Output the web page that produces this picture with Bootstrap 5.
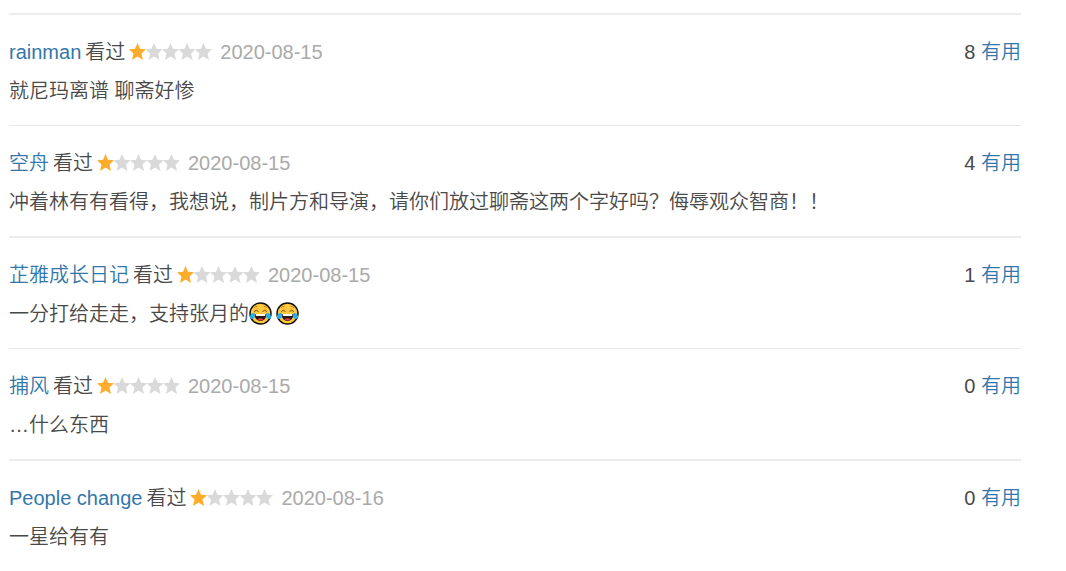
<!DOCTYPE html>
<html lang="zh-CN">
<head>
<meta charset="utf-8">
<meta name="viewport" content="width=device-width, initial-scale=1">
<title>短评</title>
<link href="https://cdn.jsdelivr.net/npm/bootstrap@5.3.0/dist/css/bootstrap.min.css" rel="stylesheet">
<style>
body { font-family: "Liberation Sans", "Noto Sans CJK SC", sans-serif; font-size: 20px; line-height: 30px; font-weight: 350; color: #494949; background: #fff; }
.reviews { padding: 13px 45px 0 9px; }
.review { border-top: 1px solid #e8e8e8; padding: 22px 0 19px; }
.review:nth-child(odd) { border-top: 2px solid #ececec; }
.review a { color: #3377aa; text-decoration: none; }
.review a:hover { text-decoration: underline; }
.review-head { gap: 4px; }
.review time { color: #aaa; margin-left: 4px; }
.review-text { margin: 9px 0 0; }
.rating { width: 83px; height: 18px; flex: none; }
.emoji { width: 23px; height: 23px; margin-right: 4px; vertical-align: -4px; }
</style>
</head>
<body>
<svg class="d-none" aria-hidden="true">
  <defs>
    <path id="star" d="M8.5 0 11 5.8 17 6.3 12.5 10.4 14 17 8.5 13.6 3 17 4.5 10.4 0 6.3 6 5.8Z"/>
    <symbol id="rate1" viewBox="0 0 83 18">
      <use href="#star" fill="#ffac2d"/>
      <g fill="#d9d9d9"><use href="#star" x="16.5"/><use href="#star" x="33"/><use href="#star" x="49.5"/><use href="#star" x="66"/></g>
    </symbol>
    <symbol id="joy" viewBox="0 0 23 23">
      <circle cx="11.5" cy="11.5" r="10.5" fill="#ffc83d" stroke="#111" stroke-width="1.5"/>
      <path d="M5 5.8Q6.5 4.2 8.3 4.4M14.7 4.4Q16.5 4.2 18 5.8" fill="none" stroke="#c78319"/>
      <path d="M5.2 9.7Q7.2 6.800 9.5 9.5M13.5 9.5Q15.8 6.800 17.8 9.7" fill="none" stroke="#6b4420"/>
      <path d="M5.5 12H17.5Q17 19 11.5 19T5.5 12Z" fill="#2a1718"/>
      <path d="M6.5 12H16.5L16 14H7Z" fill="#fff"/>
      <path d="M8.5 17.5Q11.5 15 14.5 17.5 11.5 19.6 8.5 17.5Z" fill="#f03a35"/>
      <path d="M5.500 10.800C2.500 11 .5 13 1 15.500 2 18 5.500 17 5.800 14.500ZM17.500 10.800C20.500 11 22.500 13 22 15.500 21 18 17.500 17 17.200 14.500Z" fill="#20b0f0"/>
    </symbol>
  </defs>
</svg>

<main class="reviews">
  <article class="review">
    <header class="review-head d-flex align-items-center">
      <a href="#">rainman</a><span>看过</span>
      <svg class="rating" role="img" aria-label="很差"><use href="#rate1"/></svg>
      <time datetime="2020-08-15">2020-08-15</time>
      <span class="ms-auto">8 <a href="#">有用</a></span>
    </header>
    <p class="review-text">就尼玛离谱 聊斋好惨</p>
  </article>
  <article class="review">
    <header class="review-head d-flex align-items-center">
      <a href="#">空舟</a><span>看过</span>
      <svg class="rating" role="img" aria-label="很差"><use href="#rate1"/></svg>
      <time datetime="2020-08-15">2020-08-15</time>
      <span class="ms-auto">4 <a href="#">有用</a></span>
    </header>
    <p class="review-text">冲着林有有看得，我想说，制片方和导演，请你们放过聊斋这两个字好吗？侮辱观众智商！！</p>
  </article>
  <article class="review">
    <header class="review-head d-flex align-items-center">
      <a href="#">芷雅成长日记</a><span>看过</span>
      <svg class="rating" role="img" aria-label="很差"><use href="#rate1"/></svg>
      <time datetime="2020-08-15">2020-08-15</time>
      <span class="ms-auto">1 <a href="#">有用</a></span>
    </header>
    <p class="review-text">一分打给走走，支持张月的<svg class="emoji" role="img" aria-label="笑哭"><use href="#joy"/></svg><svg class="emoji" role="img" aria-label="笑哭"><use href="#joy"/></svg></p>
  </article>
  <article class="review">
    <header class="review-head d-flex align-items-center">
      <a href="#">捕风</a><span>看过</span>
      <svg class="rating" role="img" aria-label="很差"><use href="#rate1"/></svg>
      <time datetime="2020-08-15">2020-08-15</time>
      <span class="ms-auto">0 <a href="#">有用</a></span>
    </header>
    <p class="review-text">…什么东西</p>
  </article>
  <article class="review">
    <header class="review-head d-flex align-items-center">
      <a href="#">People change</a><span>看过</span>
      <svg class="rating" role="img" aria-label="很差"><use href="#rate1"/></svg>
      <time datetime="2020-08-16">2020-08-16</time>
      <span class="ms-auto">0 <a href="#">有用</a></span>
    </header>
    <p class="review-text">一星给有有</p>
  </article>
</main>
<script src="https://cdn.jsdelivr.net/npm/bootstrap@5.3.0/dist/js/bootstrap.bundle.min.js"></script>
</body>
</html>
